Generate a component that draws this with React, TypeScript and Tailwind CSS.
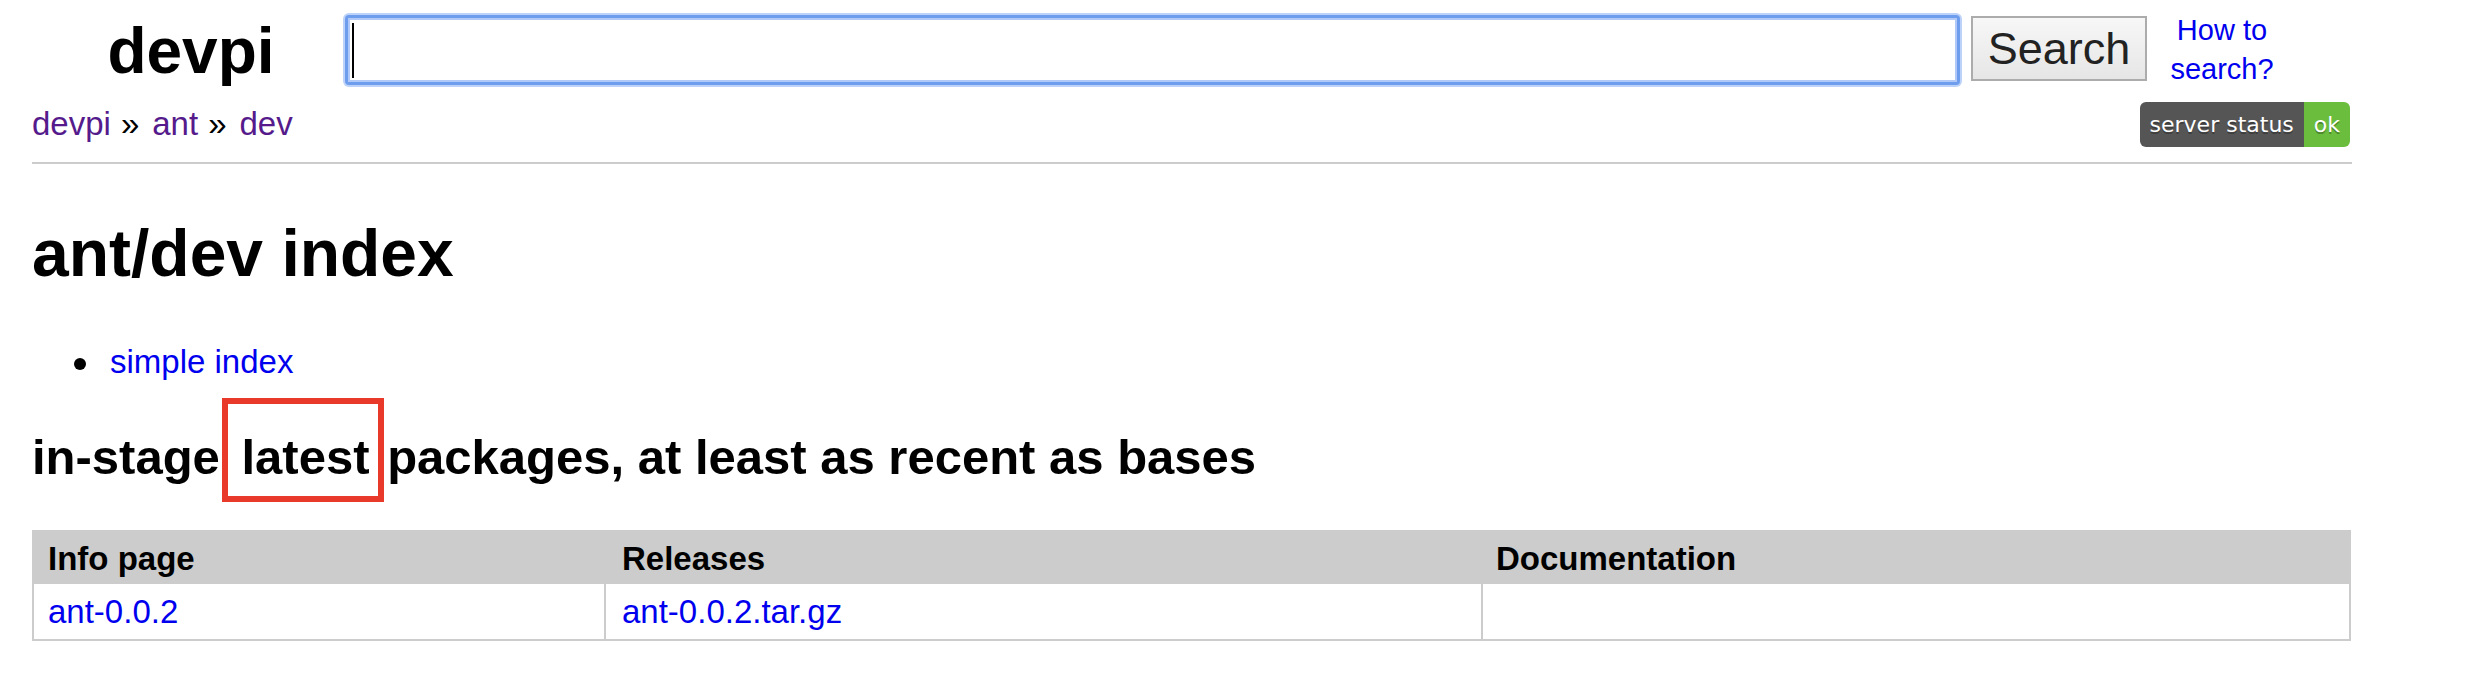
export default function App() {
  return (
    <div className="min-h-[686px] bg-white text-black font-['Liberation_Sans',Arial,sans-serif]">
      <div className="ml-8 w-[2320px] pt-[11px]">
        {/* Header: logo, search, help */}
        <div className="flex items-start h-[91px]">
          <div className="w-[313px] pl-[5px] mt-[8px] text-center text-[64px] leading-[64px] font-bold">devpi</div>
          <div className="w-[1615px] h-[70px] mt-[4px] flex items-center pl-[4px] bg-white rounded-[4px] border-[3px] border-[#6f9ded] shadow-[0_0_0_2px_#bcd2f8,inset_0_0_0_2px_#b0c9f6]">
            <span className="block w-[2px] h-[55px] bg-black" />
          </div>
          <button className="ml-[11px] mt-[5px] w-[176px] h-[65px] border-2 border-[#acacac] bg-gradient-to-b from-[#f7f7f7] to-[#e6e6e6] text-[45px] leading-[61px] text-[#222]">
            Search
          </button>
          <a className="ml-[20px] w-[110px] text-center text-[29px] leading-[39px] text-[#0000ee]">
            How to
            <br />
            search?
          </a>
        </div>

        {/* Breadcrumb + status */}
        <div className="flex items-start justify-between h-[45px]">
          <div className="mt-[2px] text-[33px] leading-[40px] text-[#551a8b]">
            <a>devpi</a>
            <span className="inline-block ml-[10px] mr-[13px] text-black">»</span>
            <a>ant</a>
            <span className="inline-block ml-[10px] mr-[13px] text-black">»</span>
            <a>dev</a>
          </div>
          <div className="mr-[2px] flex h-[45px] rounded-[6px] overflow-hidden font-['DejaVu_Sans',sans-serif] text-[22px] leading-[45px] text-white [text-shadow:0_2px_0_rgba(1,1,1,0.3)]">
            <span className="bg-[#555] px-[10px]">server status</span>
            <span className="bg-[#6bbd3e] px-[10px]">ok</span>
          </div>
        </div>

        <div className="mt-[15px] h-[2px] bg-[#cccccc]" />

        <h1 className="mt-[57px] text-[66px] leading-[64px] font-bold">ant/dev index</h1>

        <ul className="mt-[57px]">
          <li className="flex items-center text-[33px] leading-[40px]">
            <span className="ml-[42px] mt-[3px] w-[12px] h-[12px] rounded-full bg-black" />
            <a className="ml-[24px] text-[#0000ee]">simple index</a>
          </li>
        </ul>

        <h2 className="mt-[45px] text-[49px] leading-[60px] font-bold">
          in-stage{' '}
          <span className="relative ml-[8px] mr-[4px]">
            latest
            <span className="absolute -left-[20px] -right-[14px] -top-[32px] -bottom-[18px] border-[6px] border-[#e8392b]" />
          </span>{' '}
          packages, at least as recent as bases
        </h2>

        {/* Package table */}
        <div className="mt-[43px] w-[2319px]">
          <div className="flex h-[54px] bg-[#cccccc] border-x-2 border-t-2 border-[#cccccc] text-[33px] leading-[50px] pt-[2px] font-bold">
            <div className="w-[572px] pl-[14px]">Info page</div>
            <div className="w-[877px] pl-[16px]">Releases</div>
            <div className="flex-1 pl-[13px]">Documentation</div>
          </div>
          <div className="flex h-[57px] border-x-2 border-b-2 border-[#cccccc] text-[33px] leading-[55px] text-[#0000ee]">
            <div className="w-[572px] pl-[14px] border-r-2 border-[#cccccc]">
              <a>ant-0.0.2</a>
            </div>
            <div className="w-[877px] pl-[16px] border-r-2 border-[#cccccc]">
              <a>ant-0.0.2.tar.gz</a>
            </div>
            <div className="flex-1" />
          </div>
        </div>
      </div>
    </div>
  );
}
